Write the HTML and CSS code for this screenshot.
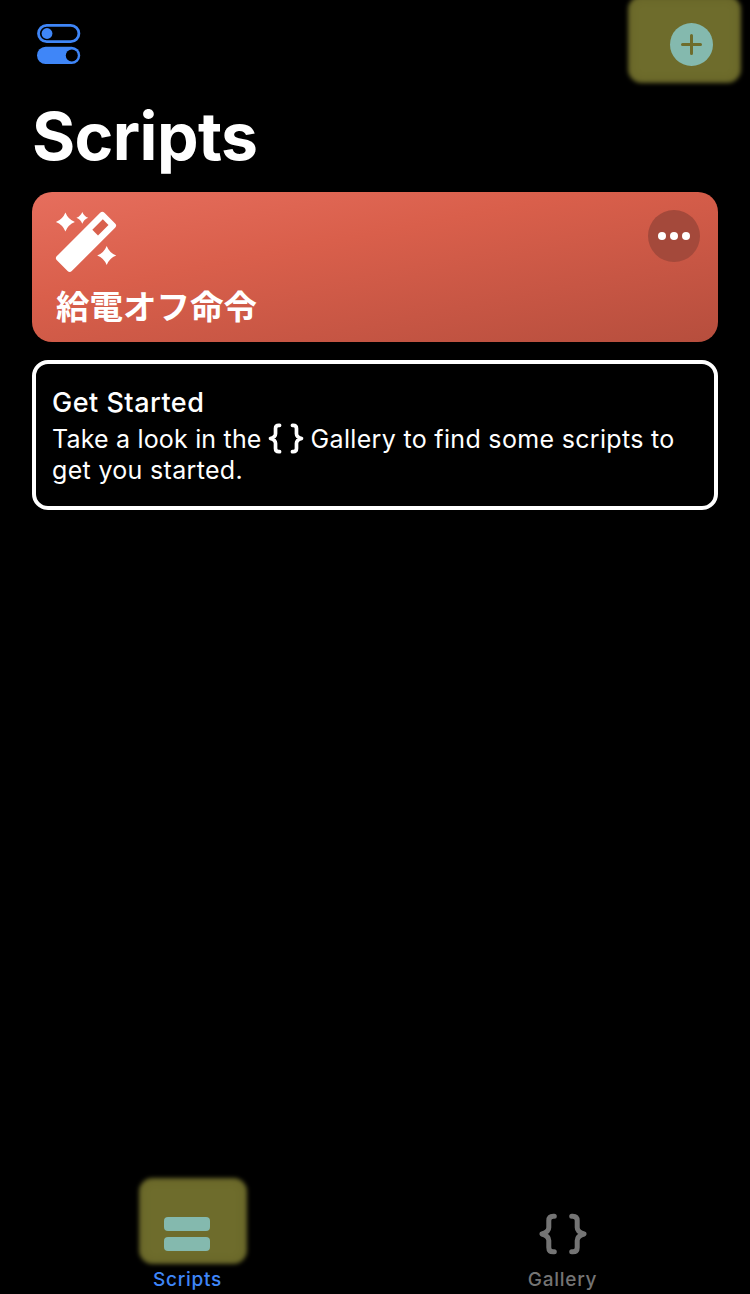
FILE: index.html
```html
<!DOCTYPE html>
<html lang="en">
<head>
<meta charset="utf-8">
<title>Scripts</title>
<link rel="stylesheet" href="styles.css">
</head>
<body>
<svg class="defs" width="0" height="0" aria-hidden="true">
  <symbol id="braces" viewBox="0 0 48 42">
    <path d="M15.3 3.2h-1Q9.8 3.2 9.8 7.6v6.9q0 4.4-6.8 6.5 6.8 2.1 6.8 6.5v6.9q0 4.4 4.5 4.4h1M32.7 3.2h1q4.5 0 4.5 4.4v6.9q0 4.4 6.8 6.5-6.8 2.1-6.8 6.5v6.9q0 4.4-4.5 4.4h-1" fill="none" stroke="currentColor" stroke-width="5" stroke-linecap="round" stroke-linejoin="round"/>
  </symbol>
</svg>
<main class="screen">
  <header class="topbar">
    <svg class="toggles" viewBox="0 0 44 42">
      <rect x="1.5" y="2.3" width="40.4" height="16.4" rx="8.2" fill="none" stroke="#3f86f8" stroke-width="2.8"/>
      <circle cx="10" cy="10.5" r="5.4" fill="#3f86f8"/>
      <rect x="0" y="23.8" width="43.2" height="17.2" rx="8.6" fill="#3f86f8"/>
      <circle cx="34.8" cy="32.4" r="6" fill="#000"/>
    </svg>
    <div class="add">
      <svg class="plus" viewBox="0 0 44 44">
        <circle cx="22.5" cy="22.5" r="21.5" fill="#84b9ae"/>
        <path d="M22.5 13.5v18M13.5 22.5h18" stroke="#6e6c2c" stroke-width="3" stroke-linecap="round"/>
      </svg>
    </div>
  </header>
  <h1 class="title">Scripts</h1>
  <section class="script-card">
    <div class="script-top">
      <svg class="wand" viewBox="0 0 64 64">
        <path d="M47.3 4.9 58 15.6 14.7 58.9 4 48.2Z" fill="#fff" stroke="#fff" stroke-width="6" stroke-linejoin="round"/>
        <path d="M47.8 9.3 53.5 15 43 25.5 37.3 19.8Z" fill="#d9604d"/>
        <path d="M10.4 2.5Q13.1 9.4 19.9 12 13.1 14.6 10.4 21.5 7.7 14.6 .9 12 7.7 9.4 10.4 2.5Z" fill="#fff"/>
        <path d="M27.3 1.9Q29 6.1 33.2 7.8 29 9.5 27.3 13.7 25.6 9.5 21.4 7.8 25.6 6.1 27.3 1.9Z" fill="#fff"/>
        <path d="M51.7 35.9Q54.4 42.8 61.2 45.4 54.4 48 51.7 54.9 49 48 42.2 45.4 49 42.8 51.7 35.9Z" fill="#fff"/>
      </svg>
      <div class="more"><i class="dot"></i><i class="dot"></i><i class="dot"></i></div>
    </div>
    <div class="script-name" lang="ja">給電オフ命令</div>
  </section>
  <section class="intro">
    <h2 class="intro-title">Get Started</h2>
    <div class="intro-line"><span class="intro-lead">Take a look in the</span><svg class="intro-braces"><use href="#braces"/></svg><span>Gallery to find some scripts to</span></div>
    <div class="intro-line">get you started.</div>
  </section>
  <nav class="tabs">
    <div class="tab tab-active">
      <div class="tab-mark">
        <div class="bars"><i class="bar"></i><i class="bar"></i></div>
      </div>
      <span class="tab-label">Scripts</span>
    </div>
    <div class="tab">
      <svg class="tab-braces"><use href="#braces"/></svg>
      <span class="tab-label">Gallery</span>
    </div>
  </nav>
</main>
</body>
</html>
```

FILE: styles.css
```css
* { box-sizing: border-box; }
body {
  margin: 0;
  background: #000;
  color: #fff;
  font-family: Inter, "Noto Sans CJK JP", sans-serif;
}
.defs { display: block; }
.screen {
  width: 750px;
  height: 1294px;
  overflow: hidden;
  display: flex;
  flex-direction: column;
}
.topbar {
  height: 88px;
  flex: none;
  display: flex;
  justify-content: space-between;
  align-items: flex-start;
  padding-left: 37px;
  padding-right: 7px;
}
.toggles { width: 44px; height: 42px; margin-top: 23px; }
.add {
  position: relative;
  width: 117px;
  height: 84px;
  padding: 22px 0 0 43px;
}
.add::before, .tab-mark::before {
  content: "";
  position: absolute;
  inset: -4px 2px 1px 2px;
  border-radius: 14px;
  background: #6e6c2c;
  box-shadow: inset 0 0 10px #5f5d24;
  filter: blur(2px);
}
.plus { position: relative; display: block; width: 44px; height: 44px; }
.title {
  margin: 0 0 0 32px;
  height: 104px;
  flex: none;
  font-size: 66px;
  line-height: 97px;
  font-weight: 700;
  letter-spacing: -0.6px;
}
.script-card {
  flex: none;
  height: 150px;
  margin: 0 32px;
  padding: 18px 18px 0 23px;
  border-radius: 20px;
  background: linear-gradient(169deg, #e66e5d 0%, #d95f4b 38%, #c75644 70%, #b64e3d 100%);
}
.script-top { display: flex; justify-content: space-between; }
.wand { width: 64px; height: 64px; }
.more {
  width: 52px;
  height: 52px;
  border-radius: 50%;
  background: #a4493b;
  display: flex;
  align-items: center;
  justify-content: center;
  gap: 4px;
}
.dot { width: 8px; height: 8px; border-radius: 50%; background: #fff; }
.script-name {
  margin-left: 1px;
  margin-top: 6px;
  font-family: "Noto Sans CJK JP", sans-serif;
  font-size: 33.5px;
  line-height: 50px;
  font-weight: 700;
}
.intro {
  flex: none;
  height: 150px;
  margin: 18px 32px 0;
  padding: 23px 16px 0 16px;
  border: 4px solid #fff;
  border-radius: 16px;
}
.intro-title {
  margin: 0 0 4px;
  font-size: 27px;
  line-height: 32px;
  font-weight: 500;
  letter-spacing: 0.5px;
}
.intro-line {
  display: flex;
  align-items: center;
  height: 31px;
  font-size: 25px;
  letter-spacing: 0.32px;
  white-space: nowrap;
}
.intro-lead { letter-spacing: 0.18px; }
.intro-braces { width: 36px; height: 31px; margin: 0 7px 0 6px; }
.tabs {
  margin-top: auto;
  height: 117px;
  flex: none;
  display: grid;
  grid-template-columns: 375px 375px;
}
.tab {
  display: flex;
  flex-direction: column;
  align-items: center;
  justify-content: flex-end;
  color: #747474;
}
.tab-active { color: #3f86f8; }
.tab-mark {
  position: relative;
  width: 112px;
  height: 88px;
  margin-left: 11px;
  padding: 40px 0 0 27px;
}
.tab-mark::before { inset: 1px 2px; }
.bars { position: relative; display: flex; flex-direction: column; gap: 6px; }
.bar { width: 46px; height: 14px; border-radius: 4px; background: #84b9ae; }
.tab-braces { width: 48px; height: 42px; margin-bottom: 10px; }
.tab-label {
  height: 29px;
  font-size: 19px;
  line-height: 30px;
  font-weight: 500;
  letter-spacing: 0.75px;
}
```
